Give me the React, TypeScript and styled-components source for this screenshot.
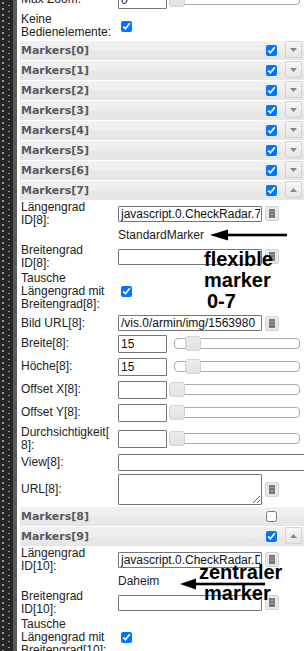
import React from "react";
import styled, { createGlobalStyle } from "styled-components";

const Global = createGlobalStyle`
  html, body { margin: 0; padding: 0; background: #fff; overflow: hidden; }
  body { font-family: "Liberation Sans", Arial, sans-serif; font-size: 12px; color: #222; }
  #root { width: 304px; height: 651px; overflow: hidden; }
`;

const Page = styled.div`
  display: flex;
  width: 304px;
  height: 651px;
  overflow: hidden;
`;

const Rail = styled.div`
  flex: 0 0 13px;
  background-color: #262626;
  background-image: radial-gradient(circle at 3px 3px, #9a9a9a 0.7px, transparent 1.1px),
    radial-gradient(circle at 9px 6px, #9a9a9a 0.7px, transparent 1.1px);
  background-size: 13px 6px;
`;

const RailEdge = styled.div`
  flex: 0 0 4px;
  background: #5a5a5a;
`;

const Panel = styled.div`
  flex: 1;
  min-width: 0;
  padding-left: 3px;
`;

const List = styled.div`
  margin-top: -12px;
  display: flex;
  flex-direction: column;
`;

const Row = styled.div<{ $h: number }>`
  display: grid;
  grid-template-columns: 98px 1fr;
  align-items: center;
  height: ${(p) => p.$h}px;
`;

const Label = styled.div`
  padding-left: 1px;
  line-height: 12.7px;
`;

const Value = styled.div`
  position: relative;
  display: flex;
  align-items: center;
  min-width: 0;
`;

const TextInput = styled.input<{ $w: number; $h: number }>`
  box-sizing: border-box;
  width: ${(p) => p.$w}px;
  height: ${(p) => p.$h}px;
  flex: none;
  margin: 0;
  padding: 0 1px 0 2px;
  border: 1px solid #767676;
  border-radius: 1px;
  font: inherit;
  color: #111;
  background: #fff;
  outline: none;
`;

const Area = styled.textarea`
  box-sizing: border-box;
  width: 144px;
  height: 31px;
  flex: none;
  margin: 0;
  padding: 1px 2px;
  border: 1px solid #767676;
  border-radius: 1px;
  font: inherit;
  resize: both;
`;

const Picker = styled.span`
  box-sizing: border-box;
  flex: none;
  width: 14px;
  height: 15px;
  margin-left: 3px;
  border: 1px solid #d3d3d3;
  border-radius: 2px;
  background: #e8e8e8;
  display: flex;
  align-items: center;
  justify-content: center;
`;

const Check = styled.input`
  width: 11px;
  height: 11px;
  margin: 0;
  flex: none;
`;

const ValueCheck = styled(Check)`
  margin-left: 3px;
`;

const Hint = styled.span`
  color: #1b1b2a;
  white-space: nowrap;
`;

const Track = styled.div`
  position: relative;
  box-sizing: border-box;
  width: 126px;
  height: 11px;
  margin-left: 7px;
  border: 1px solid #aaa;
  border-radius: 4px;
  background: #fff;
  flex: none;
`;

const Handle = styled.span`
  position: absolute;
  top: -3px;
  box-sizing: border-box;
  width: 16px;
  height: 15px;
  border: 1px solid #d3d3d3;
  border-radius: 3px;
  background: linear-gradient(#ececec, #e2e2e2);
`;

const Header = styled.div`
  box-sizing: border-box;
  height: 20px;
  display: flex;
  align-items: center;
  padding: 0 2px 0 1px;
  background: linear-gradient(#f1f1f1 0%, #eeeeee 50%, #e8e8e8 51%, #e6e6e6 100%);
  border-bottom: 1px solid #fff;
`;

const HeaderTitle = styled.span`
  flex: 1;
  font-family: "DejaVu Sans", Verdana, sans-serif;
  font-weight: bold;
  font-size: 11px;
  color: #555960;
`;

const HeaderCheck = styled(Check)`
  margin-right: 8px;
`;

const Toggle = styled.span`
  box-sizing: border-box;
  width: 17px;
  height: 17px;
  border: 1px solid #d3d3d3;
  border-radius: 2px;
  background: linear-gradient(#f6f6f6, #e6e6e6);
  display: flex;
  align-items: center;
  justify-content: center;
  margin-bottom: 2px;
`;

const TogglePlaceholder = styled.span`
  width: 17px;
  height: 17px;
`;

const Note = styled.div<{ $left: number; $top: number }>`
  position: absolute;
  left: ${(p) => p.$left}px;
  top: ${(p) => p.$top}px;
  font-family: "Liberation Sans", Arial, sans-serif;
  font-weight: bold;
  font-size: 20px;
  line-height: 21px;
  color: #000;
  white-space: nowrap;
  pointer-events: none;
  z-index: 2;
`;

const NoteLine = styled.div<{ $indent?: number }>`
  padding-left: ${(p) => p.$indent ?? 0}px;
`;

const ArrowBox = styled.svg<{ $left: number; $dy: number }>`
  position: absolute;
  left: ${(p) => p.$left}px;
  top: 50%;
  transform: translateY(calc(-50% + ${(p) => p.$dy}px));
  z-index: 2;
`;

const PickIcon = () => (
  <svg width="6" height="9" viewBox="0 0 6 9">
    <rect x="0" y="0" width="6" height="9" fill="#7a7a7a" />
    <rect x="1" y="2" width="4" height="1" fill="#9a9a9a" />
    <rect x="1" y="5" width="4" height="1" fill="#9a9a9a" />
  </svg>
);

const Tri = ({ up }: { up?: boolean }) => (
  <svg width="7" height="4" viewBox="0 0 7 4">
    {up ? <polygon points="0,4 7,4 3.5,0" fill="#888" /> : <polygon points="0,0 7,0 3.5,4" fill="#888" />}
  </svg>
);

const Arrow = ({ left, len, head, dy = 0 }: { left: number; len: number; head: number; dy?: number }) => (
  <ArrowBox $left={left} $dy={dy} width={len} height={12} viewBox={`0 0 ${len} 12`}>
    <polygon points={`0,6 ${head},0.5 ${head},11.5`} fill="#000" />
    <rect x={head - 1} y={4.7} width={len - head + 1} height={2.6} fill="#000" />
  </ArrowBox>
);

const Slider = ({ value }: { value: number }) => (
  <Track>
    <Handle style={{ left: -6 + value * 1.07 }} />
  </Track>
);

const MarkerHeader = ({ n, checked = true, open, button = true }: { n: number; checked?: boolean; open?: boolean; button?: boolean }) => (
  <Header>
    <HeaderTitle>Markers[{n}]</HeaderTitle>
    <HeaderCheck type="checkbox" defaultChecked={checked} />
    {button ? (
      <Toggle>
        <Tri up={open} />
      </Toggle>
    ) : (
      <TogglePlaceholder />
    )}
  </Header>
);

const FieldWithPicker = ({ value }: { value: string }) => (
  <>
    <TextInput $w={144} $h={16} defaultValue={value} />
    <Picker>
      <PickIcon />
    </Picker>
  </>
);

const NumberRow = ({ label, value, slider }: { label: string; value: string; slider: number }) => (
  <Row $h={23}>
    <Label>{label}</Label>
    <Value>
      <TextInput $w={49} $h={18} defaultValue={value} />
      <Slider value={slider} />
    </Value>
  </Row>
);

export default function App() {
  return (
    <>
      <Global />
      <Page>
        <Rail />
        <RailEdge />
        <Panel>
          <List>
            <Row $h={23}>
              <Label>Max Zoom:</Label>
              <Value>
                <TextInput $w={49} $h={18} defaultValue="0" />
                <Slider value={0} />
              </Value>
            </Row>
            <Row $h={30}>
              <Label>
                Keine
                <br />
                Bedienelemente:
              </Label>
              <Value>
                <ValueCheck type="checkbox" defaultChecked />
              </Value>
            </Row>
            {[0, 1, 2, 3, 4, 5, 6].map((n) => (
              <MarkerHeader key={n} n={n} />
            ))}
            <MarkerHeader n={7} open />
            <Row $h={24}>
              <Label>
                Längengrad
                <br />
                ID[8]:
              </Label>
              <Value>
                <FieldWithPicker value="javascript.0.CheckRadar.7" />
              </Value>
            </Row>
            <Row $h={19}>
              <Label />
              <Value>
                <Hint>StandardMarker</Hint>
                <Arrow left={92} len={77} head={18} />
                <Note $left={86} $top={21}>
                  <NoteLine>flexible</NoteLine>
                  <NoteLine>marker</NoteLine>
                  <NoteLine $indent={3}>0-7</NoteLine>
                </Note>
              </Value>
            </Row>
            <Row $h={25}>
              <Label>
                Breitengrad
                <br />
                ID[8]:
              </Label>
              <Value>
                <FieldWithPicker value="" />
              </Value>
            </Row>
            <Row $h={45}>
              <Label>
                Tausche
                <br />
                Längengrad mit
                <br />
                Breitengrad[8]:
              </Label>
              <Value>
                <ValueCheck type="checkbox" defaultChecked />
              </Value>
            </Row>
            <Row $h={18}>
              <Label>Bild URL[8]:</Label>
              <Value>
                <FieldWithPicker value="/vis.0/armin/img/1563980" />
              </Value>
            </Row>
            <NumberRow label="Breite[8]:" value="15" slider={15} />
            <NumberRow label="Höche[8]:" value="15" slider={15} />
            <NumberRow label="Offset X[8]:" value="" slider={0} />
            <NumberRow label="Offset Y[8]:" value="" slider={0} />
            <Row $h={29}>
              <Label>
                Durchsichtigkeit[
                <br />
                8]:
              </Label>
              <Value>
                <TextInput $w={49} $h={18} defaultValue="" />
                <Slider value={0} />
              </Value>
            </Row>
            <Row $h={19}>
              <Label>View[8]:</Label>
              <Value>
                <TextInput $w={200} $h={17} defaultValue="" />
              </Value>
            </Row>
            <Row $h={35}>
              <Label>URL[8]:</Label>
              <Value>
                <Area defaultValue="" />
                <Picker>
                  <PickIcon />
                </Picker>
              </Value>
            </Row>
            <MarkerHeader n={8} checked={false} button={false} />
            <MarkerHeader n={9} open />
            <Row $h={24}>
              <Label>
                Längengrad
                <br />
                ID[10]:
              </Label>
              <Value>
                <FieldWithPicker value="javascript.0.CheckRadar.Daheim" />
              </Value>
            </Row>
            <Row $h={19}>
              <Label />
              <Value>
                <Hint>Daheim</Hint>
                <Arrow left={62} len={85} head={16} dy={3} />
                <Note $left={81} $top={-12}>
                  <NoteLine>zentraler</NoteLine>
                  <NoteLine $indent={5}>marker</NoteLine>
                </Note>
              </Value>
            </Row>
            <Row $h={25}>
              <Label>
                Breitengrad
                <br />
                ID[10]:
              </Label>
              <Value>
                <FieldWithPicker value="" />
              </Value>
            </Row>
            <Row $h={45}>
              <Label>
                Tausche
                <br />
                Längengrad mit
                <br />
                Breitengrad[10]:
              </Label>
              <Value>
                <ValueCheck type="checkbox" defaultChecked />
              </Value>
            </Row>
          </List>
        </Panel>
      </Page>
    </>
  );
}
